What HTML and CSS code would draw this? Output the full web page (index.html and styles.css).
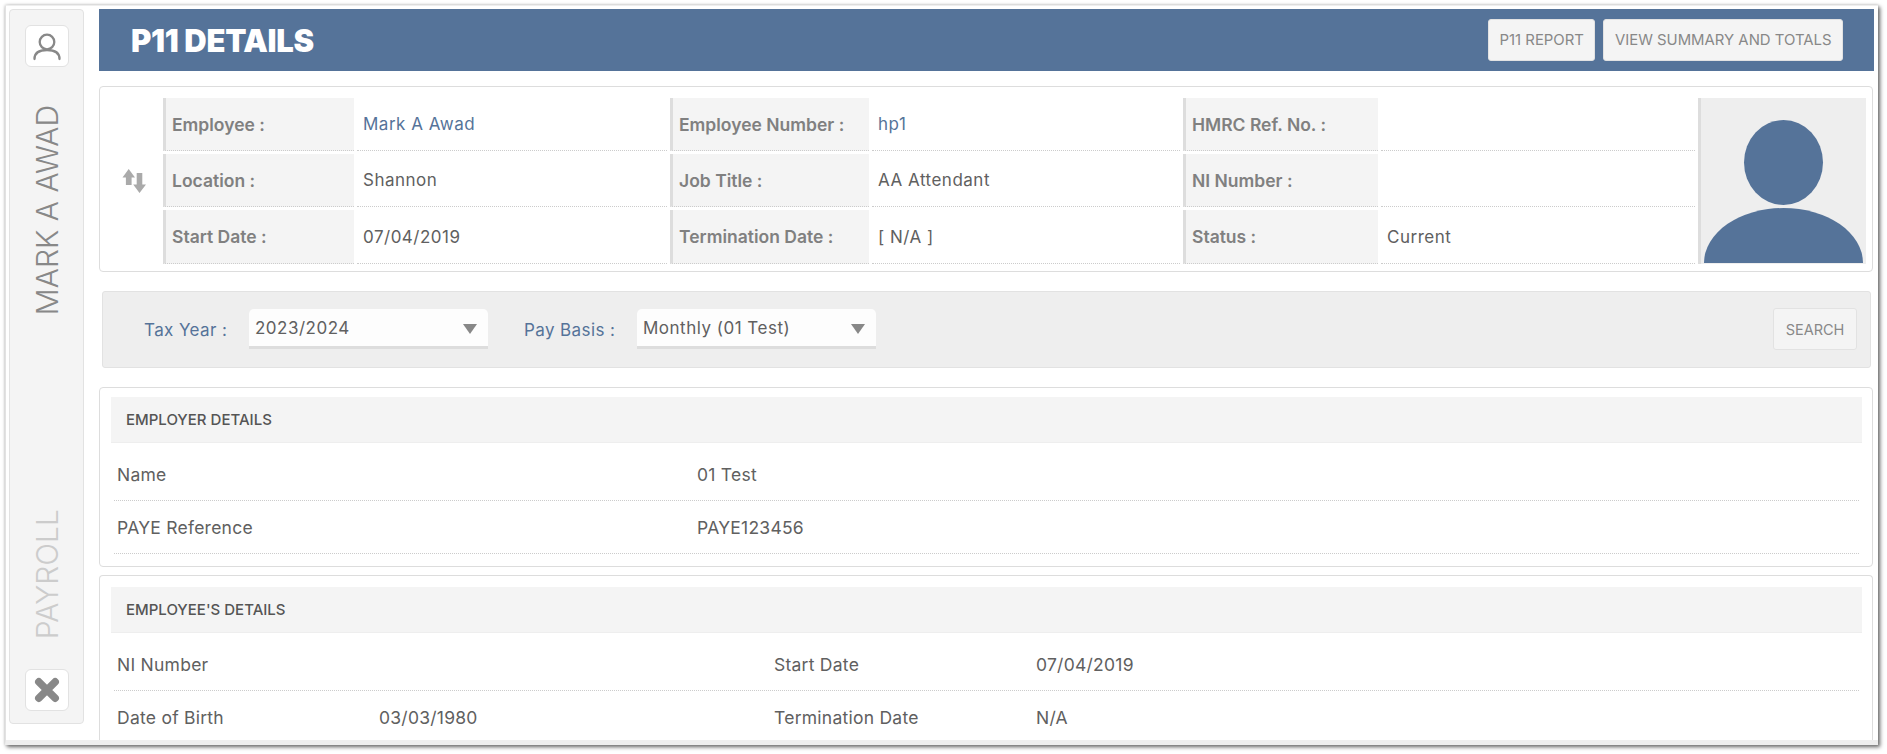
FILE: index.html
```html
<!DOCTYPE html>
<html lang="en">
<head>
<meta charset="utf-8">
<title>P11 Details</title>
<link rel="stylesheet" href="styles.css">
</head>
<body>
<div class="window">
  <aside class="side">
    <button class="side-btn" aria-label="Employee">
      <svg class="icon-user" viewBox="0 0 30 30"><circle cx="15" cy="11" r="7.3"/><path d="M2.5 28c0-6 5-9 12.500-9s12.500 3 12.500 9"/></svg>
    </button>
    <div class="side-name">MARK A AWAD</div>
    <div class="side-module">PAYROLL</div>
    <button class="side-btn side-close" aria-label="Close">
      <svg class="icon-x" viewBox="0 0 24 24"><path d="M5 5L19 19M19 5L5 19"/></svg>
    </button>
  </aside>
  <main class="main">
    <header class="head">
      <h1 class="title">P11 DETAILS</h1>
      <div class="head-actions">
        <button class="btn">P11 REPORT</button>
        <button class="btn">VIEW SUMMARY AND TOTALS</button>
      </div>
    </header>

    <section class="info card">
      <div class="swap">
        <svg class="icon-swap" viewBox="0 0 24 24"><path d="M6.700 0L13 8.500H9.600V16H3.900V8.500H0.500Z"/><path d="M14.700 4H20.300V15.500H24L17.500 24L11.200 15.500H14.700Z"/></svg>
      </div>
      <div class="info-grid">
        <div class="lbl">Employee :</div><div class="val link">Mark A Awad</div>
        <div class="lbl">Employee Number :</div><div class="val link">hp1</div>
        <div class="lbl">HMRC Ref. No. :</div><div class="val"></div>
        <div class="lbl">Location :</div><div class="val">Shannon</div>
        <div class="lbl">Job Title :</div><div class="val">AA Attendant</div>
        <div class="lbl">NI Number :</div><div class="val"></div>
        <div class="lbl">Start Date :</div><div class="val">07/04/2019</div>
        <div class="lbl">Termination Date :</div><div class="val">[ N/A ]</div>
        <div class="lbl">Status :</div><div class="val">Current</div>
      </div>
      <div class="photo">
        <svg class="avatar" viewBox="0 0 165 166"><ellipse cx="82.500" cy="64.500" rx="39.500" ry="42.500"/><path d="M3 165A79.500 55 0 0 1 162 165Z"/></svg>
      </div>
    </section>

    <section class="filter">
      <label class="f-label">Tax Year :</label>
      <div class="select"><span>2023/2024</span><i class="caret"></i></div>
      <label class="f-label f-label-2">Pay Basis :</label>
      <div class="select"><span>Monthly (01 Test)</span><i class="caret"></i></div>
      <button class="btn btn-search">SEARCH</button>
    </section>

    <section class="card block">
      <h2 class="band">EMPLOYER DETAILS</h2>
      <div class="row row-employer"><span>Name</span><span>01 Test</span></div>
      <div class="row row-employer"><span>PAYE Reference</span><span>PAYE123456</span></div>
    </section>

    <section class="card block block-last">
      <h2 class="band">EMPLOYEE'S DETAILS</h2>
      <div class="row row-employee"><span>NI Number</span><span></span><span>Start Date</span><span>07/04/2019</span></div>
      <div class="row row-employee"><span>Date of Birth</span><span>03/03/1980</span><span>Termination Date</span><span>N/A</span></div>
    </section>
  </main>
</div>
</body>
</html>
```

FILE: styles.css
```css
* { box-sizing: border-box; }
html, body { margin: 0; height: 100%; background: #fff; overflow: hidden; }
body { font-family: Inter, "Liberation Sans", sans-serif; color: #606060; font-size: 17px; }
button { font-family: inherit; cursor: pointer; }

.window {
  margin: 5px 0 0 5px;
  width: 1873px;
  height: 740px;
  padding: 3px 0 0 3px;
  display: flex;
  background: #fff;
  border-left: 1px solid #e2e2e2;
  border-top: 1px solid #eee;
  border-bottom: 5px solid #eee;
  box-shadow: 2px 2px 4px #666, 0 0 3px #ccc;
}

.side {
  width: 75px;
  height: 715px;
  flex: none;
  display: flex;
  flex-direction: column;
  align-items: center;
  padding: 15px 0 12px;
  background: #f4f4f4;
  border: 1px solid #e2e2e2;
  border-radius: 4px;
}
.side-btn {
  width: 44px;
  height: 42px;
  flex: none;
  padding: 0;
  display: flex;
  align-items: center;
  justify-content: center;
  background: #fff;
  border: 1px solid #e2e2e2;
  border-radius: 6px;
}
.icon-user { width: 30px; height: 30px; fill: none; stroke: #888; stroke-width: 2.300; stroke-linecap: round; }
.icon-x { width: 28px; height: 28px; fill: none; stroke: #888; stroke-width: 6.500; stroke-linecap: round; }
.side-name, .side-module {
  writing-mode: vertical-rl;
  transform: rotate(180deg);
  font-size: 30px;
  font-weight: 300;
  line-height: 34px;
  white-space: nowrap;
}
.side-name { margin-top: 38px; color: #888; }
.side-module { margin-top: auto; margin-bottom: 30px; color: #ccc; }

.main {
  width: 1775px;
  margin-left: 15px;
  flex: none;
  overflow: hidden;
}
.head {
  height: 62px;
  display: flex;
  align-items: center;
  justify-content: space-between;
  padding: 0 31px 0 32px;
  background: #557399;
}
.title {
  margin: 0;
  color: #fff;
  font-size: 31px;
  font-weight: 900;
  letter-spacing: -0.300px;
}
.head-actions { display: flex; gap: 8px; }
.btn {
  height: 42px;
  padding: 0 10.500px;
  background: #f4f4f4;
  border: 1px solid #e2e2e2;
  border-radius: 3px;
  color: #888;
  font-size: 14.900px;
}

.card {
  margin-right: 1px;
  background: #fff;
  border: 1px solid #ddd;
  border-radius: 4px;
}
.info {
  height: 186px;
  margin-top: 15px;
  padding: 11px 7px 0 0;
  display: flex;
}
.swap {
  width: 63px;
  flex: none;
  display: flex;
  align-items: center;
  padding: 0 0 8px 22px;
}
.icon-swap { width: 24px; height: 24px; fill: #aaa; }
.info-grid {
  width: 1535px;
  height: 166px;
  display: grid;
  grid-template-columns: 191px 316px 199px 314px 195px 320px;
  grid-template-rows: 53px 53px 54px;
  row-gap: 3px;
}
.lbl, .val {
  display: flex;
  align-items: center;
  border-bottom: 1px dotted #ccc;
}
.lbl {
  padding-left: 6px;
  background: #f4f4f4;
  border-left: 3px solid #ddd;
  color: #808080;
  font-weight: 600;
  font-size: 17.500px;
}
.val { margin: 0 3px; padding-left: 6px; letter-spacing: 0.500px; }
.link { color: #557399; }
.photo {
  width: 168px;
  height: 166px;
  flex: none;
  background: #eee;
  border-left: 3px solid #ddd;
}
.avatar { display: block; width: 165px; height: 166px; fill: #557399; }

.filter {
  height: 77px;
  margin: 19px 3px 0;
  display: flex;
  align-items: flex-start;
  padding: 17px 13px 0 41px;
  background: #eee;
  border: 1px solid #e2e2e2;
  border-radius: 3px;
}
.f-label {
  width: 105px;
  height: 40px;
  flex: none;
  display: flex;
  align-items: center;
  padding-top: 2px;
  color: #557399;
  letter-spacing: 0.400px;
}
.f-label-2 { width: 113px; margin-left: 36px; }
.select {
  width: 239px;
  height: 40px;
  flex: none;
  position: relative;
  padding: 7px 6px 0;
  line-height: 24px;
  background: #fdfdfd;
  border-bottom: 3px solid #ddd;
  border-radius: 5px 5px 0 0;
  letter-spacing: 0.500px;
}
.caret {
  position: absolute;
  right: 11px;
  top: 15px;
  border-left: 7px solid transparent;
  border-right: 7px solid transparent;
  border-top: 10px solid #888;
}
.btn-search {
  width: 84px;
  margin: -1px 0 0 auto;
  font-size: 14.500px;
}

.block { margin-top: 19px; height: 180px; padding: 9px 10px 0 11px; }
.block-last { margin-top: 8px; height: 200px; padding-top: 11px; border-bottom: 0; }
.band {
  height: 46px;
  margin: 0;
  display: flex;
  align-items: center;
  padding-left: 15px;
  background: #f4f4f4;
  border-bottom: 1px solid #eee;
  color: #555;
  font-size: 15px;
  font-weight: 500;
}
.row {
  height: 53px;
  margin: 0 3px;
  display: grid;
  align-items: center;
  padding-left: 3px;
  border-bottom: 1px dotted #ccc;
  font-size: 17.500px;
}
.row span { letter-spacing: 0.250px; }
.row-employer { grid-template-columns: 580px 1fr; }
.row-employee { grid-template-columns: 262px 395px 262px 1fr; }
.band + .row { height: 58px; padding-top: 6px; }
```
